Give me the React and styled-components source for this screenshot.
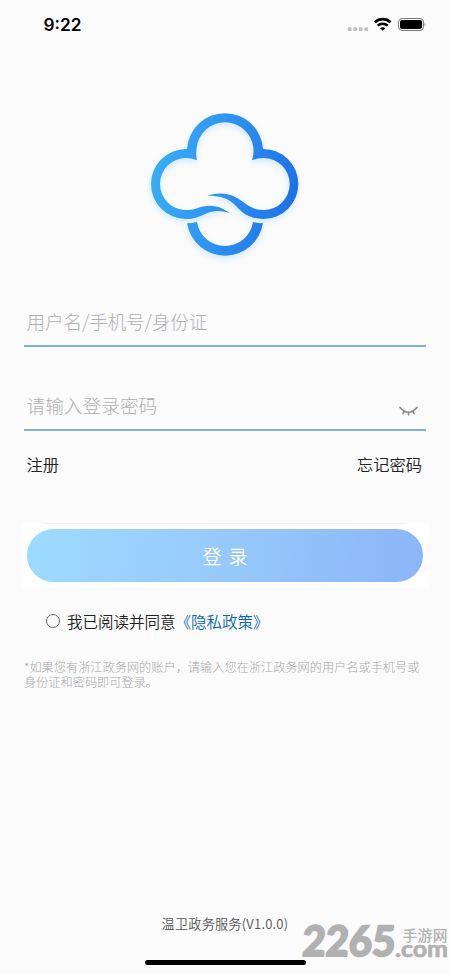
import React from "react";
import styled, { createGlobalStyle } from "styled-components";

const Global = createGlobalStyle`
  * { box-sizing: border-box; }
  body { margin: 0; background: #fbfbfb; font-family: "Noto Sans CJK SC", sans-serif; font-weight: 350; }
  button, input { font: inherit; }
`;

const Screen = styled.main`
  position: relative;
  display: flex;
  flex-direction: column;
  width: 450px;
  height: 974px;
  overflow: hidden;
  background: #fbfbfb;
`;

const StatusBar = styled.header`
  display: flex;
  justify-content: space-between;
  align-items: center;
  height: 50px;
  padding: 0 24px 0 43.5px;
`;

const Clock = styled.time`
  font: 600 17.3px/20px Inter, sans-serif;
  color: #000;
`;

const StatusIcons = styled.svg`
  display: block;
  width: 80px;
  height: 20px;
`;

const Logo = styled.svg`
  display: block;
  width: 170px;
  height: 170px;
  margin: 50px 0 0 140px;
  filter: drop-shadow(0 3px 3px rgba(74, 164, 250, 0.22));
`;

const Form = styled.form`
  display: flex;
  flex-direction: column;
  padding: 0 24px;
  margin-top: 27px;
`;

const Field = styled.label`
  display: flex;
  align-items: center;
  justify-content: space-between;
  height: 50px;
  margin-bottom: ${(p) => p.$gap}px;
  padding: 0 7px 0 2.5px;
  border-bottom: 2px solid #7eb3cd;
`;

const Input = styled.input`
  flex: 1;
  min-width: 0;
  height: 46px;
  padding: 0 0 2px;
  border: 0;
  outline: 0;
  background: transparent;
  font-size: 18.7px;
  font-weight: 300;
  letter-spacing: ${(p) => p.$tracking || 0}px;
  &::placeholder { color: #b0b0b4; opacity: 1; }
`;

const EyeIcon = styled.svg`
  width: 21px;
  height: 12px;
  margin-top: 11px;
`;

const Links = styled.nav`
  display: flex;
  justify-content: space-between;
  padding: 0 4px 0 2.5px;
`;

const TextLink = styled.a`
  font-size: 16.3px;
  line-height: 24px;
  color: #222;
`;

const ButtonFrame = styled.div`
  width: 408px;
  height: 65px;
  margin: 47px 0 0 -3px;
  padding: 6px 6px 7px;
  background: linear-gradient(#edf3f6, #edf3f6) 23px 0 / 363px 1px no-repeat #fefefe;
`;

const LoginButton = styled.button`
  display: block;
  width: 396px;
  height: 53px;
  padding: 0;
  border: 0;
  border-radius: 27px;
  background: linear-gradient(100deg, #9ddbff 0%, #98ccfb 43%, #8bb5f8 100%);
  color: #fff;
  font-size: 19px;
  font-weight: 350;
  line-height: 52px;
  word-spacing: 3px;
`;

const Agreement = styled.div`
  display: flex;
  align-items: center;
  height: 24px;
  margin: 21px 0 0 22px;
  font-size: 15.5px;
  line-height: 24px;
  color: #222;
  white-space: nowrap;
`;

const Radio = styled.span`
  width: 14px;
  height: 14px;
  margin-right: 7px;
  border: 1px solid #666;
  border-radius: 50%;
`;

const Policy = styled.a`
  color: #0869b5;
`;

const Hint = styled.p`
  margin: 27px 0 0;
  font-size: 12.2px;
  font-weight: 300;
  line-height: 14.5px;
  color: #a8a8a8;
  white-space: nowrap;
`;

const Version = styled.footer`
  margin-top: auto;
  padding-bottom: 26px;
  text-align: center;
  font-size: 13.1px;
  line-height: 20px;
  letter-spacing: 0.25px;
  color: #555;
`;

const HomeIndicator = styled.div`
  width: 161px;
  height: 5px;
  margin: 0 auto 9px;
  border-radius: 3px;
  background: #000;
`;

const Watermark = styled.aside`
  position: absolute;
  left: 295px;
  top: 915px;
  width: 155px;
  height: 50px;
`;

const MarkSvg = styled.svg`
  display: block;
  fill: #b1b1b1;
  stroke: #b1b1b1;
  stroke-linejoin: round;
`;

function App() {
  return (
    <Screen>
      <Global />
      <StatusBar>
        <Clock>9:22</Clock>
        <StatusIcons viewBox="0 0 80 20">
          {[1.8, 7.3, 12.8, 18.3].map((x) => (
            <rect key={x} x={x} y="12.3" width="3.8" height="3.8" rx="1.2" fill="#c2c2c2" />
          ))}
          <g fill="none" stroke="#000" strokeWidth="2.6">
            <path d="M28.8 7.2a11.6 11.6 0 0 1 15.8 0" />
            <path d="M31.7 10.6a7.5 7.5 0 0 1 10 0" />
          </g>
          <path d="M34 13.2q2.7-2 5.4 0l-2.7 2.6z" />
          <rect x="52.5" y="3.5" width="25" height="12" rx="3.6" fill="none" stroke="#777" />
          <rect x="54" y="5" width="22" height="9" rx="2" />
          <path d="M78.7 7.5q1.5 2 0 4z" fill="#888" />
        </StatusIcons>
      </StatusBar>

      <Logo viewBox="0 0 510 510">
        <defs>
          <linearGradient id="brand" gradientUnits="userSpaceOnUse" x1="40" y1="210" x2="472" y2="286">
            <stop offset="0" stopColor="#38adf7" />
            <stop offset=".5" stopColor="#2d91f0" />
            <stop offset="1" stopColor="#1d70e8" />
          </linearGradient>
        </defs>
        <g fill="url(#brand)">
          <path d="M141 147A114.2 114.2 0 0 1 369 147A105 105 0 0 1 371 357C337 357 310 344 288 318C265 292 237 287 202 287C232 277 263 278 290 293C322 312 333 330 371 330A78 78 0 0 0 371 174Q353 174 336 181C341 164 341 154 340 144A85.4 85.4 0 0 0 170 144C168 156 168 166 171 181Q154 174 138 174A78 78 0 0 0 138 330C169 330 179 317 210 317C235 317 254 328 270 339C240 330 219 331 197 341C175 351 160 357 138 357A105 105 0 0 1 138 147Z" />
          <path d="M141 370Q156 370 171 366A85 85 0 0 0 339 366Q354 370 369 370A115.5 115.5 0 0 1 141 370Z" />
        </g>
      </Logo>

      <Form>
        <Field $gap={34}>
          <Input $tracking={-0.2} placeholder="用户名/手机号/身份证" />
        </Field>
        <Field $gap={21}>
          <Input type="password" placeholder="请输入登录密码" />
          <EyeIcon viewBox="0 0 21 12" fill="none" stroke="#888" strokeWidth="1.7" strokeLinecap="round">
            <path d="M2 2.5q8.5 9.5 17 0M6.2 6.1L5 8.4M10.5 7.4V9.7M14.8 6.1L16 8.4" />
          </EyeIcon>
        </Field>
        <Links>
          <TextLink>注册</TextLink>
          <TextLink>忘记密码</TextLink>
        </Links>
        <ButtonFrame>
          <LoginButton type="button">登 录</LoginButton>
        </ButtonFrame>
        <Agreement>
          <Radio />
          我已阅读并同意<Policy>《隐私政策》</Policy>
        </Agreement>
        <Hint>
          *如果您有浙江政务网的账户，请输入您在浙江政务网的用户名或手机号或
          <br />
          身份证和密码即可登录。
        </Hint>
      </Form>

      <Version>温卫政务服务(V1.0.0)</Version>
      <HomeIndicator />
      <Watermark>
        <MarkSvg width="155" height="50" viewBox="0 0 155 50">
          <text x="0" y="41" transform="translate(9 0) skewX(-3)" textLength="93" lengthAdjust="spacingAndGlyphs" fontFamily="Lato, sans-serif" fontWeight="900" fontSize="42" strokeWidth="1.8">2265</text>
          <text x="107.5" y="26" textLength="45" fontFamily="Noto Sans CJK SC, sans-serif" fontWeight="500" fontSize="14.8" strokeWidth="0">手游网</text>
          <text x="100" y="41.5" textLength="53" lengthAdjust="spacingAndGlyphs" fontFamily="Lato, sans-serif" fontWeight="700" fontSize="22.5" strokeWidth=".7">.com</text>
        </MarkSvg>
      </Watermark>
    </Screen>
  );
}

export default App;
